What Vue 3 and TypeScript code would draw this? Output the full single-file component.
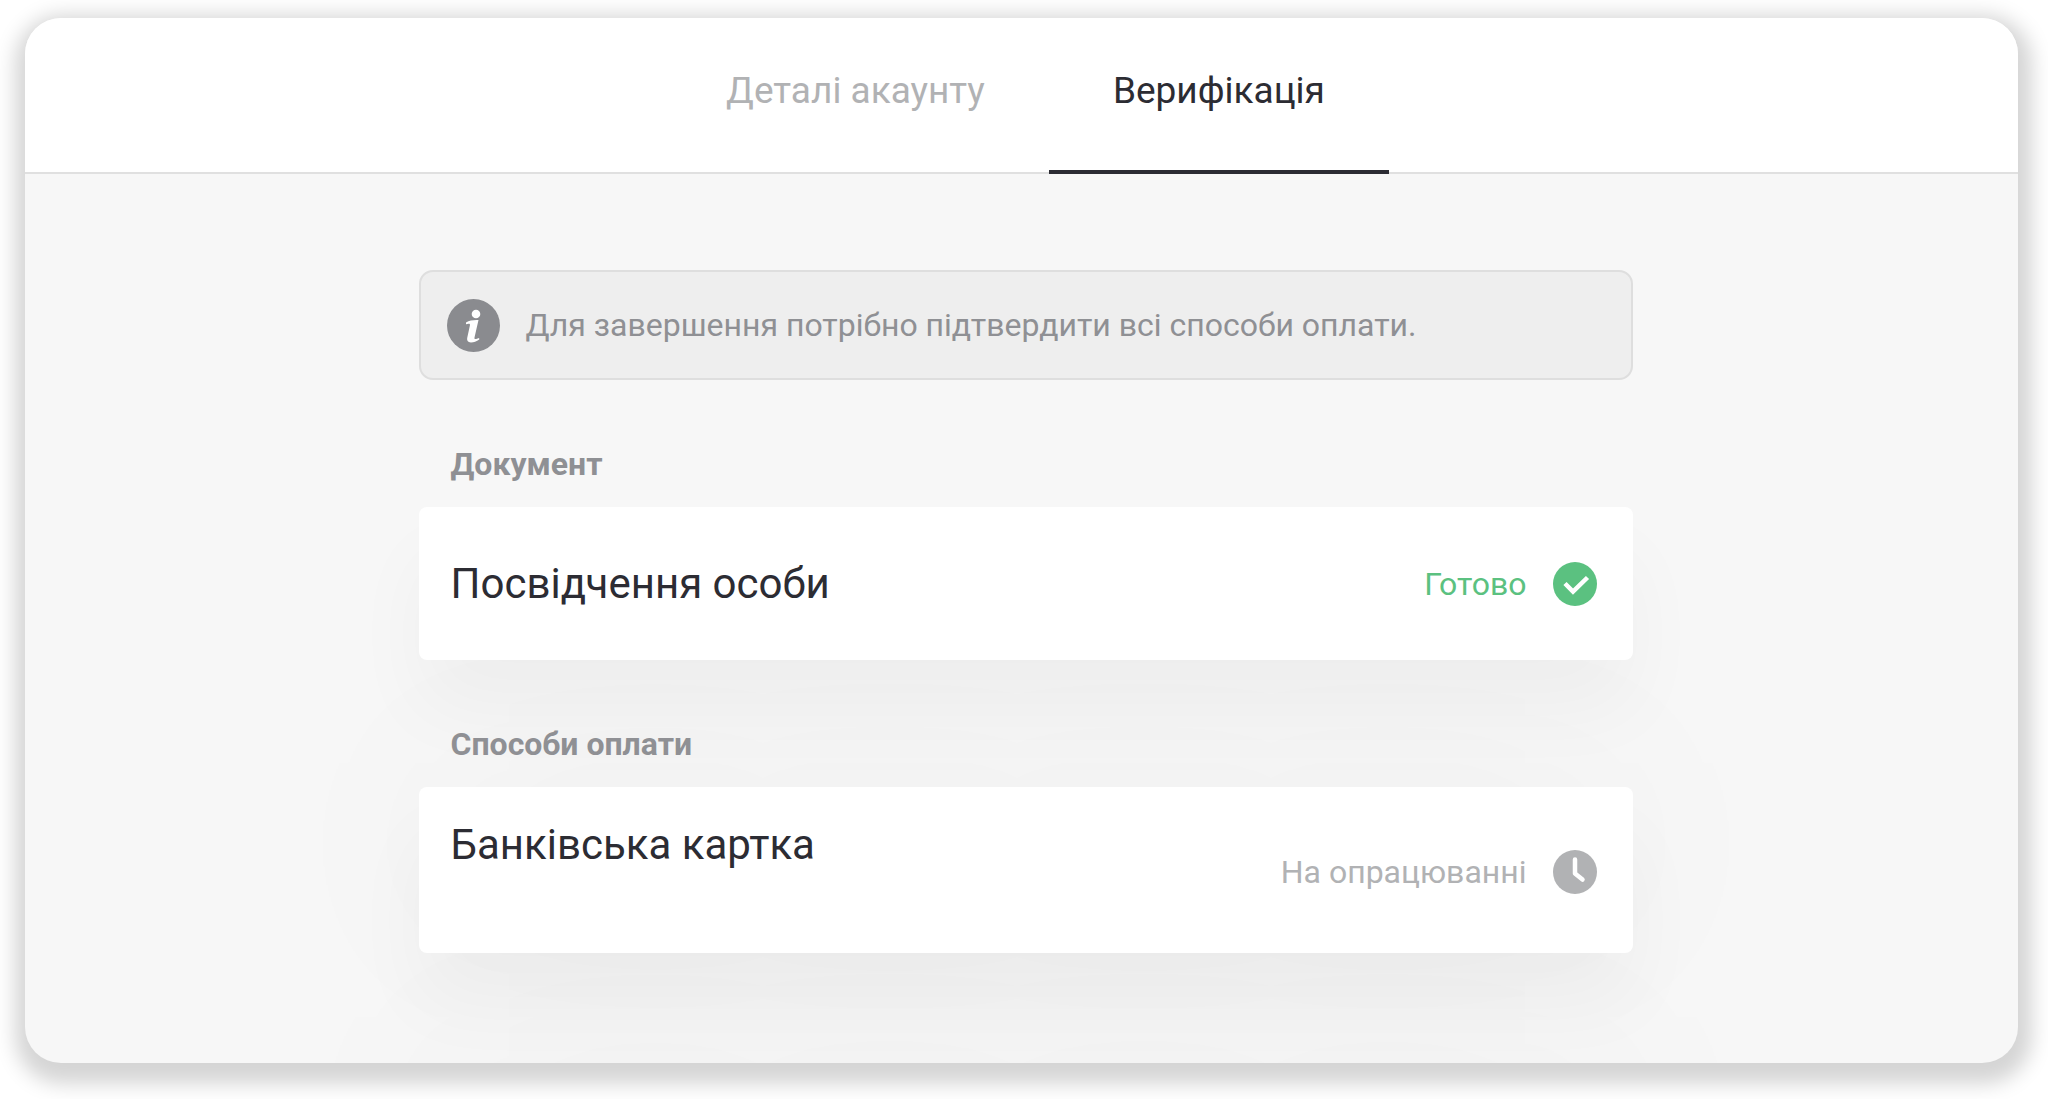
<script setup lang="ts">
import { ref } from 'vue'

type Status = 'done' | 'pending'

interface Section {
  id: string
  label: string
  title: string
  status: Status
  statusText: string
}

const tabs: string[] = ['Деталі акаунту', 'Верифікація']
const active = ref(1)

const sections: Section[] = [
  { id: 'document', label: 'Документ', title: 'Посвідчення особи', status: 'done', statusText: 'Готово' },
  { id: 'payment', label: 'Способи оплати', title: 'Банківська картка', status: 'pending', statusText: 'На опрацюванні' },
]
</script>

<template>
  <div class="window">
    <nav class="tabs">
      <button
        v-for="(tab, i) in tabs"
        :key="tab"
        type="button"
        class="tab"
        :class="{ active: active === i }"
        @click="active = i"
      >{{ tab }}</button>
    </nav>

    <main class="content">
      <div class="notice">
        <svg class="notice-icon" viewBox="0 0 53 53" aria-hidden="true">
          <circle cx="26.500" cy="26.500" r="26.500" fill="#8a8b8f" />
          <circle cx="29" cy="15" r="4.300" fill="#fff" />
          <path d="M19 23.500c3-1.800 6.500-2.500 10.500-2.500h2l-4 17.500c-.3 1.500.6 1.700 1.600 1.400l3-1 .2 1.600c-2.800 2-5.600 2.900-8.300 2.900-3.300 0-4.300-2-3.700-4.800l2.600-12.100c.3-1.400-.2-1.900-1.400-1.700l-2.500.4z" fill="#fff" />
        </svg>
        <p class="notice-text">Для завершення потрібно підтвердити всі способи оплати.</p>
      </div>

      <section v-for="s in sections" :key="s.id" class="section">
        <h2 class="label">{{ s.label }}</h2>
        <div class="panel" :class="s.status">
          <h3 class="title">{{ s.title }}</h3>
          <div class="status">
            <span>{{ s.statusText }}</span>
            <svg class="status-icon" viewBox="0 0 44 44" aria-hidden="true">
              <circle cx="22" cy="22" r="22" fill="currentColor" />
              <path v-if="s.status === 'done'" d="M12 21.500l8 8L34.500 15.500" fill="none" stroke="#fff" stroke-width="4.500" />
              <path v-else d="M22 9.500v14l7.500 6" fill="none" stroke="#fff" stroke-width="4.500" stroke-linecap="round" stroke-linejoin="round" />
            </svg>
          </div>
        </div>
      </section>
    </main>
  </div>
</template>

<style>
body {
  background: #fff;
}
</style>

<style scoped>
.window {
  margin: 18px 30px 36px 25px;
  border-radius: 36px;
  overflow: hidden;
  background: #f7f7f7;
  box-shadow: 2px 9px 20px 12px rgba(0, 0, 0, 0.17);
  font-family: Roboto, "Noto Sans", sans-serif;
  color: #2c2c33;
}

.tabs {
  display: flex;
  justify-content: center;
  padding-left: 8px;
  background: #fff;
  box-shadow: inset 0 -2px #e0e0e0;
}

.tab {
  padding: 49px 64px 59px;
  border: 0;
  background: none;
  font: 400 37px/48px Roboto, "Noto Sans", sans-serif;
  color: #b1b2b4;
  cursor: pointer;
}

.tab.active {
  color: #2c2c33;
  box-shadow: inset 0 -4px #2c2c33;
}

.content {
  max-width: 1214px;
  margin: 0 auto;
  padding: 96px 24px 110px 32px;
}

.notice {
  display: flex;
  align-items: center;
  gap: 26px;
  box-sizing: border-box;
  min-height: 110px;
  padding: 24px 26px;
  border: 2px solid #dedede;
  border-radius: 14px;
  background: #eee;
}

.notice-icon {
  flex: none;
  width: 53px;
  height: 53px;
}

.notice-text {
  margin: 0;
  font-size: 32px;
  line-height: 40px;
  color: #8f9094;
}

.section {
  position: relative;
  margin-top: 64px;
}

.label {
  margin: 0 32px 23px;
  font-size: 32px;
  line-height: 40px;
  font-weight: 700;
  color: #8f9094;
}

.panel {
  display: flex;
  align-items: center;
  justify-content: space-between;
  padding: 51px 36px 50px 32px;
  border-radius: 8px;
  background: #fff;
  box-shadow: 0 50px 80px rgba(0, 0, 0, 0.035), 0 260px 220px rgba(0, 0, 0, 0.04);
}

.panel.pending {
  padding: 32px 36px 28px 32px;
}

.title {
  margin: 0;
  font-size: 42px;
  line-height: 52px;
  font-weight: 400;
}

.pending .title {
  margin-bottom: 54px;
}

.status {
  display: flex;
  align-items: center;
  gap: 26px;
  font-size: 32px;
  line-height: 40px;
}

.done .status {
  color: #5bc180;
}

.pending .status {
  color: #b1b2b4;
}

.status-icon {
  flex: none;
  width: 44px;
  height: 44px;
}
</style>
